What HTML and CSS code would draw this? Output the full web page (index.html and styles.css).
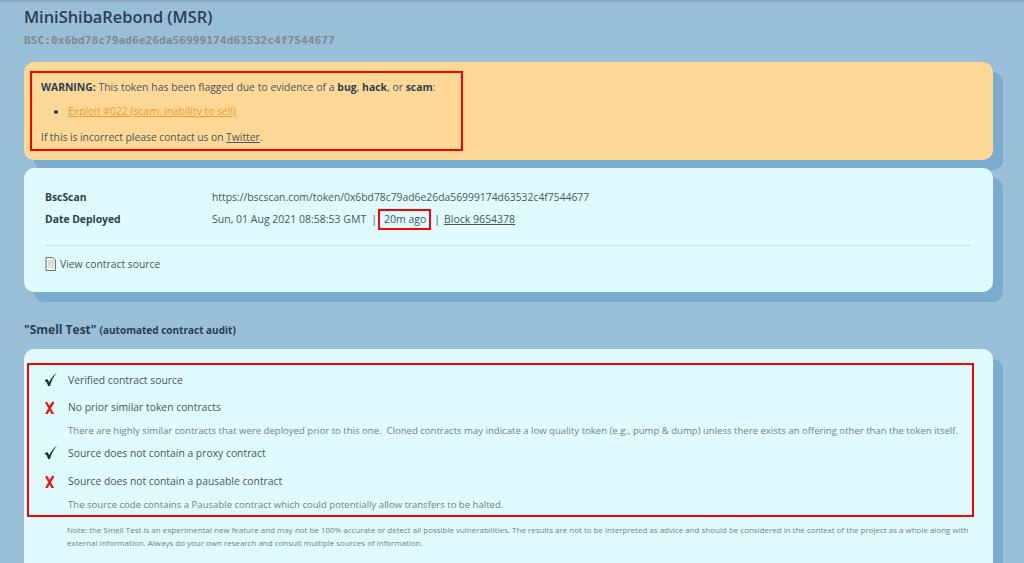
FILE: index.html
```html
<!DOCTYPE html>
<html lang="en">
<head>
    <meta charset="UTF-8">
    <title>MiniShibaRebond (MSR)</title>
    <link rel="stylesheet" href="styles.css">
</head>
<body>
    <main>
        <h1>MiniShibaRebond (MSR)</h1>
        <div class="address">BSC:0x6bd78c79ad6e26da56999174d63532c4f7544677</div>

        <section class="card warning">
            <div class="marked warning-inner">
                <p><b>WARNING:</b> This token has been flagged due to evidence of a <b>bug</b>, <b>hack</b>, or <b>scam</b>:</p>
                <ul>
                    <li><a class="exploit" href="#">Exploit #022 (scam: inability to sell)</a></li>
                </ul>
                <p>If this is incorrect please contact us on <a href="#">Twitter</a>.</p>
            </div>
        </section>

        <section class="card info">
            <div class="info-row">
                <div class="info-label">BscScan</div>
                <div>https://bscscan.com/token/0x6bd78c79ad6e26da56999174d63532c4f7544677</div>
            </div>
            <div class="info-row">
                <div class="info-label">Date Deployed</div>
                <div class="info-date">
                    <span>Sun, 01 Aug 2021 08:58:53 GMT</span>
                    <span class="sep">|</span>
                    <span class="marked age">20m ago</span>
                    <span class="sep">|</span>
                    <a href="#">Block 9654378</a>
                </div>
            </div>
            <hr>
            <div class="source-link">
                <svg width="11" height="14" viewBox="0 0 11 14">
                    <path d="M1 .5h6.5L10.5 3v10.5H1z" fill="#f2f2f0" stroke="#6b7075"/>
                    <path d="M3 4h6M3 6h6M3 8h6M3 10h6" stroke="#c4c6c6"/>
                </svg>
                <span>View contract source</span>
            </div>
        </section>

        <h2>"Smell Test" <small>(automated contract audit)</small></h2>

        <section class="card smell">
            <div class="marked checks">
                <div class="check">
                    <svg class="mark" width="14" height="15" viewBox="0 0 14 15"><path d="M.5 8.500L3.200 7C4.100 8 4.700 9 5.100 10.200C7 6.500 9.500 3 13 .5C10 4 7.500 8.500 6 14H4C3.500 11.500 2.500 9.500 .5 8.500z" fill="#1f2d3d"/></svg>
                    <span>Verified contract source</span>
                </div>
                <div class="check">
                    <svg class="mark" width="14" height="15" viewBox="1 -2 14 15"><path d="M3 1c2 3.500 5 9 7.500 13M10.500 1C8 4.500 5.500 9 3 14" fill="none" stroke="#f01414" stroke-width="2.200"/></svg>
                    <span>No prior similar token contracts</span>
                </div>
                <p class="detail">There are highly similar contracts that were deployed prior to this one.&nbsp; Cloned contracts may indicate a low quality token (e.g., pump &amp; dump) unless there exists an offering other than the token itself.</p>
                <div class="check">
                    <svg class="mark" width="14" height="15" viewBox="0 0 14 15"><path d="M.5 8.500L3.200 7C4.100 8 4.700 9 5.100 10.200C7 6.500 9.500 3 13 .5C10 4 7.500 8.500 6 14H4C3.500 11.500 2.500 9.500 .5 8.500z" fill="#1f2d3d"/></svg>
                    <span>Source does not contain a proxy contract</span>
                </div>
                <div class="check">
                    <svg class="mark" width="14" height="15" viewBox="1 -2 14 15"><path d="M3 1c2 3.500 5 9 7.500 13M10.500 1C8 4.500 5.500 9 3 14" fill="none" stroke="#f01414" stroke-width="2.200"/></svg>
                    <span>Source does not contain a pausable contract</span>
                </div>
                <p class="detail">The source code contains a Pausable contract which could potentially allow transfers to be halted.</p>
            </div>
            <p class="note">Note: the Smell Test is an experimental new feature and may not be 100% accurate or detect all possible vulnerabilities. The results are not to be interpreted as advice and should be considered in the context of the project as a whole along with external information. Always do your own research and consult multiple sources of information.</p>
        </section>
    </main>
</body>
</html>
```

FILE: styles.css
```css
html, body {
    height: 563px;
    overflow: hidden;
}
body {
    margin: 0;
    background-color: #98bed8;
    border-top: 2px solid #8aa9c2;
    box-sizing: border-box;
    font-family: "Open Sans", sans-serif;
    font-size: 10.35px;
    color: #4a5560;
}
main {
    padding: 5px 31px 0 24px;
}
h1 {
    margin: 0;
    font-size: 16.4px;
    line-height: 20px;
    font-weight: 600;
    color: #2c3e50;
}
.address {
    margin-top: 7px;
    font-family: "DejaVu Sans Mono", monospace;
    font-size: 11.23px;
    font-weight: bold;
    line-height: 14px;
    color: #7f8a92;
}
.card {
    border-radius: 10px;
    box-shadow: 10px 10px 0 #7aaccd;
}
.marked {
    border: 2px solid #ff0000;
    box-sizing: border-box;
}
b {
    font-weight: 700;
    color: #2c3e50;
}
a {
    color: #4a5560;
}
p {
    margin: 0;
}

.warning {
    margin-top: 14px;
    height: 98px;
    padding: 9px 0 0 6px;
    box-sizing: border-box;
    background-color: #fed896;
}
.warning-inner {
    width: 433px;
    height: 80px;
    padding: 7px 9px;
    line-height: 14px;
}
.warning-inner p:first-child {
    word-spacing: 0.17px;
}
.warning-inner p:last-child {
    word-spacing: -0.2px;
}
.warning-inner ul {
    margin: 10px 0 12px;
    padding-left: 27px;
}
.warning-inner li::marker {
    color: #2c3e50;
}
.exploit {
    color: #f79a2c;
}

.info {
    margin-top: 8px;
    height: 124px;
    padding: 21px 22px 0 21px;
    box-sizing: border-box;
    background-color: #dffbfd;
}
.info-row {
    display: flex;
    height: 22px;
    line-height: 16px;
}
.info-label {
    width: 167px;
    font-weight: 700;
    color: #2c3e50;
}
.info-date {
    display: flex;
    align-items: center;
    height: 16px;
    font-size: 10.5px;
}
.sep {
    margin: 0 1px 0 5px;
}
.age {
    padding: 0 3px 0 4px;
    height: 21px;
    line-height: 17px;
}
.age + .sep {
    margin: 0 0 0 3px;
}
.info-date a {
    margin-left: 4px;
}
hr {
    margin: 12px 0 0;
    border: none;
    border-top: 1px solid #d2e0e2;
}
.source-link {
    display: flex;
    align-items: center;
    gap: 4px;
    margin-top: 10px;
    line-height: 16px;
}

h2 {
    margin: 30px 0 0;
    font-size: 12px;
    line-height: 16px;
    font-weight: 700;
    color: #2c3e50;
}
h2 small {
    font-size: 10px;
}

.smell {
    margin-top: 11px;
    height: 300px;
    padding: 14px 19px 0 3px;
    box-sizing: border-box;
    background-color: #dffbfd;
}
.checks {
    height: 154px;
    padding: 1px 0 0 15px;
}
.check {
    display: flex;
    align-items: center;
    gap: 10px;
    height: 27px;
}
.detail + .check + .check {
    margin-top: 1px;
}
.mark {
    flex: none;
    width: 14px;
}
.detail {
    padding: 2px 0 0 24px;
    height: 19px;
    box-sizing: border-box;
    line-height: 17px;
    font-size: 9.57px;
    color: #777f85;
    white-space: nowrap;
}
.note {
    margin: 6px 0 0 40px;
    font-size: 7.97px;
    line-height: 13px;
    color: #777f85;
}
```
